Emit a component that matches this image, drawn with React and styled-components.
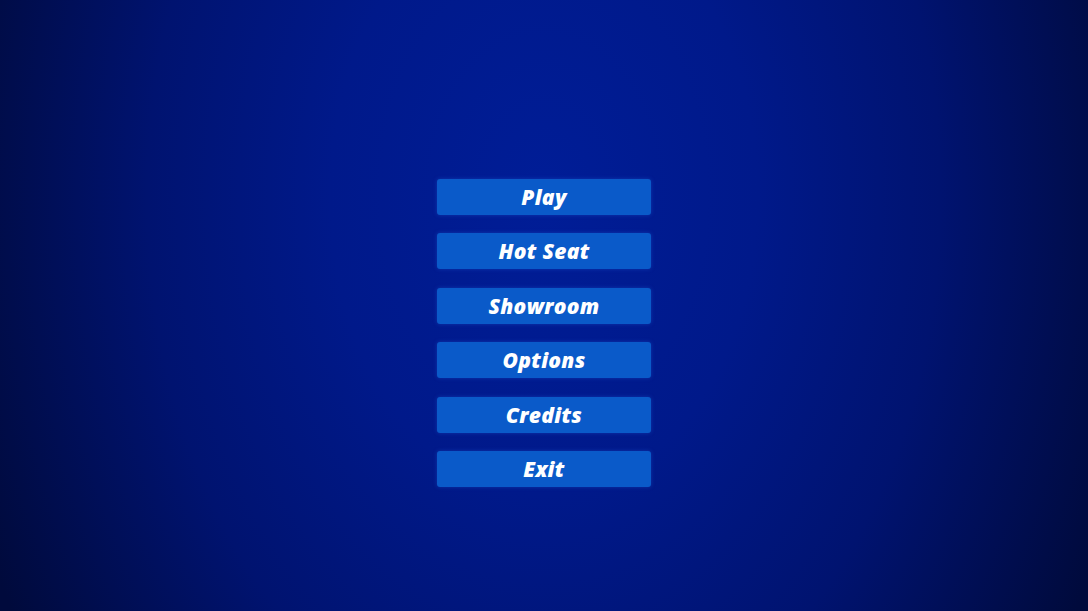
import React from 'react';
import styled, { createGlobalStyle } from 'styled-components';

const GlobalStyle = createGlobalStyle`
  html, body {
    margin: 0;
    padding: 0;
    height: 100%;
  }
  #root {
    height: 100%;
  }
`;

const Screen = styled.div`
  width: 100vw;
  height: 100vh;
  display: flex;
  align-items: center;
  justify-content: center;
  background: radial-gradient(ellipse 56% 140% at 50% 32%, #001d97 0%, #00198a 35%, #001370 65%, #000a3c 100%);
  overflow: hidden;
`;

const Menu = styled.nav`
  display: flex;
  flex-direction: column;
  gap: 18.4px;
  margin-top: 55px;
`;

const MenuButton = styled.button`
  width: 214px;
  height: 36px;
  border: none;
  border-radius: 3px;
  background: #0a5ac9;
  box-shadow: 0 0 4px rgba(40, 110, 230, 0.35);
  color: #ffffff;
  font-family: 'Open Sans', 'DejaVu Sans', sans-serif;
  font-style: italic;
  font-weight: 800;
  font-size: 21px;
  letter-spacing: 0.3px;
  padding: 0;
  cursor: pointer;
`;

const items = ['Play', 'Hot Seat', 'Showroom', 'Options', 'Credits', 'Exit'];

export default function App() {
  return (
    <Screen>
      <GlobalStyle />
      <Menu>
        {items.map((label) => (
          <MenuButton key={label}>{label}</MenuButton>
        ))}
      </Menu>
    </Screen>
  );
}
